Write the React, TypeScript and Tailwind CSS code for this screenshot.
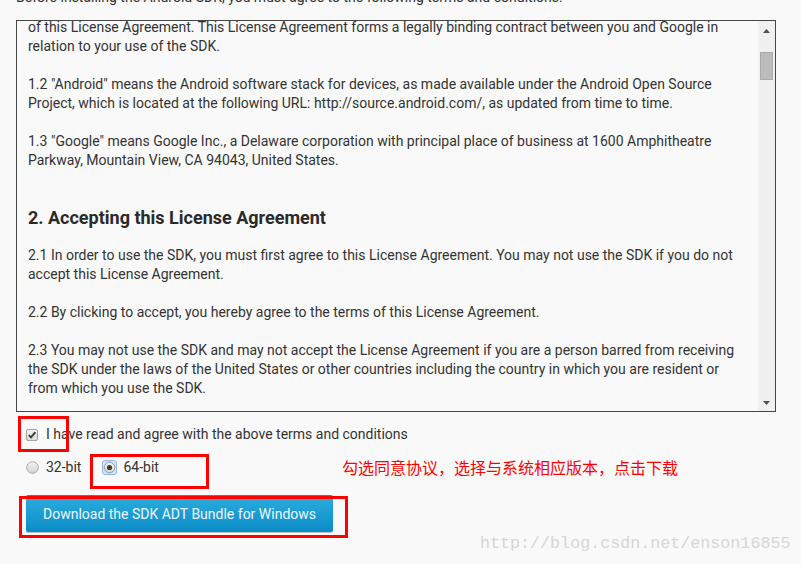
import React from "react";

const lines1 = [
  "of this License Agreement. This License Agreement forms a legally binding contract between you and Google in",
  "relation to your use of the SDK.",
];

function P({ lines, last }: { lines: string[]; last?: boolean }) {
  return (
    <div className={last ? "" : "mb-[19px]"}>
      {lines.map((l, i) => (
        <div key={i} className="whitespace-nowrap h-[19px]">
          {l}
        </div>
      ))}
    </div>
  );
}

function Checkbox() {
  return (
    <svg width="12" height="12" viewBox="0 0 12 12" className="block">
      <defs>
        <linearGradient id="cbg" x1="0" y1="0" x2="0" y2="1">
          <stop offset="0" stopColor="#f2f2f2" />
          <stop offset="1" stopColor="#d9d9d9" />
        </linearGradient>
      </defs>
      <rect x="0.5" y="0.5" width="11" height="11" rx="1.5" fill="url(#cbg)" stroke="#a3a3a3" />
      <path d="M2.8 6.2 L5 8.4 L9.4 3.2" fill="none" stroke="#3a3a3a" strokeWidth="1.9" />
    </svg>
  );
}

function Radio({ selected }: { selected?: boolean }) {
  if (selected) {
    return (
      <svg width="15" height="15" viewBox="0 0 15 15" className="block">
        <defs>
          <linearGradient id="rsg" x1="0" y1="0" x2="0" y2="1">
            <stop offset="0" stopColor="#f4f4f4" />
            <stop offset="1" stopColor="#d6d6d6" />
          </linearGradient>
        </defs>
        <rect x="0.5" y="0.5" width="14" height="14" rx="2.5" fill="#d4e6fb" stroke="#8fb9ec" />
        <circle cx="7.5" cy="7.5" r="5.3" fill="url(#rsg)" stroke="#9a9a9a" />
        <circle cx="7.5" cy="7.5" r="2.6" fill="#3e3e3e" />
      </svg>
    );
  }
  return (
    <svg width="13" height="13" viewBox="0 0 13 13" className="block">
      <defs>
        <linearGradient id="rg" x1="0" y1="0" x2="0" y2="1">
          <stop offset="0" stopColor="#f3f3f3" />
          <stop offset="1" stopColor="#d3d3d3" />
        </linearGradient>
      </defs>
      <circle cx="6.5" cy="6.5" r="5.8" fill="url(#rg)" stroke="#a8a8a8" />
    </svg>
  );
}

export default function App() {
  return (
    <div
      className="relative w-[801px] h-[564px] overflow-hidden bg-[#f9f9f9] text-[#333] text-[14px] leading-[19px]"
      style={{ fontFamily: "Roboto, 'Liberation Sans', sans-serif" }}
    >
      <div className="pl-[16px] mt-[-12px] h-[19px] whitespace-nowrap">
        Before installing the Android SDK, you must agree to the following terms and conditions.
      </div>

      <div className="ml-[16px] mt-[13px] w-[760px] h-[392px] border border-[#474747] flex overflow-hidden">
        <div className="flex-1 overflow-hidden pl-[11px]">
          <div className="mt-[-3px]">
            <P lines={lines1} />
            <P
              lines={[
                '1.2 "Android" means the Android software stack for devices, as made available under the Android Open Source',
                "Project, which is located at the following URL: http://source.android.com/, as updated from time to time.",
              ]}
            />
            <P
              lines={[
                '1.3 "Google" means Google Inc., a Delaware corporation with principal place of business at 1600 Amphitheatre',
                "Parkway, Mountain View, CA 94043, United States.",
              ]}
              last
            />
            <div className="mt-[36px] mb-[16px] text-[18px] leading-[24px] font-bold text-[#2a2a2a] whitespace-nowrap">
              2. Accepting this License Agreement
            </div>
            <P
              lines={[
                "2.1 In order to use the SDK, you must first agree to this License Agreement. You may not use the SDK if you do not",
                "accept this License Agreement.",
              ]}
            />
            <P lines={["2.2 By clicking to accept, you hereby agree to the terms of this License Agreement."]} />
            <P
              lines={[
                "2.3 You may not use the SDK and may not accept the License Agreement if you are a person barred from receiving",
                "the SDK under the laws of the United States or other countries including the country in which you are resident or",
                "from which you use the SDK.",
              ]}
              last
            />
          </div>
        </div>
        <div className="w-[17px] h-full bg-[#f0f0f0] flex flex-col items-center">
          <svg width="7" height="4" viewBox="0 0 7 4" className="mt-[8px]">
            <path d="M0 4 L3.5 0 L7 4 Z" fill="#505050" />
          </svg>
          <div className="mt-[19px] w-[13px] h-[28px] bg-[#bcbcbc] border border-[#a9a9a9]" />
          <div className="flex-1" />
          <svg width="7" height="4" viewBox="0 0 7 4" className="mb-[6px]">
            <path d="M0 0 L7 0 L3.5 4 Z" fill="#505050" />
          </svg>
        </div>
      </div>

      <div className="pl-[16px]">
        <div className="mt-[13px] h-[19px] flex items-center">
          <div className="ml-[10px]">
            <Checkbox />
          </div>
          <span className="ml-[8px] whitespace-nowrap">I have read and agree with the above terms and conditions</span>
        </div>

        <div className="mt-[14px] h-[19px] flex items-center">
          <div className="ml-[10px]">
            <Radio />
          </div>
          <span className="ml-[7px] whitespace-nowrap">32-bit</span>
          <div className="ml-[21px]">
            <Radio selected />
          </div>
          <span className="ml-[6px] whitespace-nowrap">64-bit</span>
          <span
            className="ml-[183px] text-[16px] text-[#ff0000] whitespace-nowrap"
            style={{ fontFamily: "'Noto Sans CJK SC', sans-serif" }}
          >
            勾选同意协议，选择与系统相应版本，点击下载
          </span>
        </div>

        <button className="mt-[18px] ml-[10px] w-[307px] h-[37px] rounded-[2px] border-t border-[#1f8fc0] bg-gradient-to-b from-[#2badde] to-[#078cc6] text-[#eef7fc] text-[14px] flex items-center justify-center shadow-[0_1px_1px_rgba(0,0,0,0.25)]">
          Download the SDK ADT Bundle for Windows
        </button>
      </div>

      {/* annotation boxes */}
      <div className="absolute left-[18px] top-[416px] w-[51px] h-[36px] border-[3px] border-[#ff0000]" />
      <div className="absolute left-[90px] top-[454px] w-[119px] h-[35px] border-[3px] border-[#ff0000]" />
      <div className="absolute left-[19px] top-[496px] w-[329px] h-[42px] border-[3px] border-[#ff0000]" />

      {/* watermark */}
      <div
        className="absolute left-[480px] top-[534px] text-[16.7px] leading-[20px] text-[#d6d6d6] whitespace-nowrap"
        style={{ fontFamily: "'Liberation Mono', monospace" }}
      >
        http://blog.csdn.net/enson16855
      </div>
    </div>
  );
}
